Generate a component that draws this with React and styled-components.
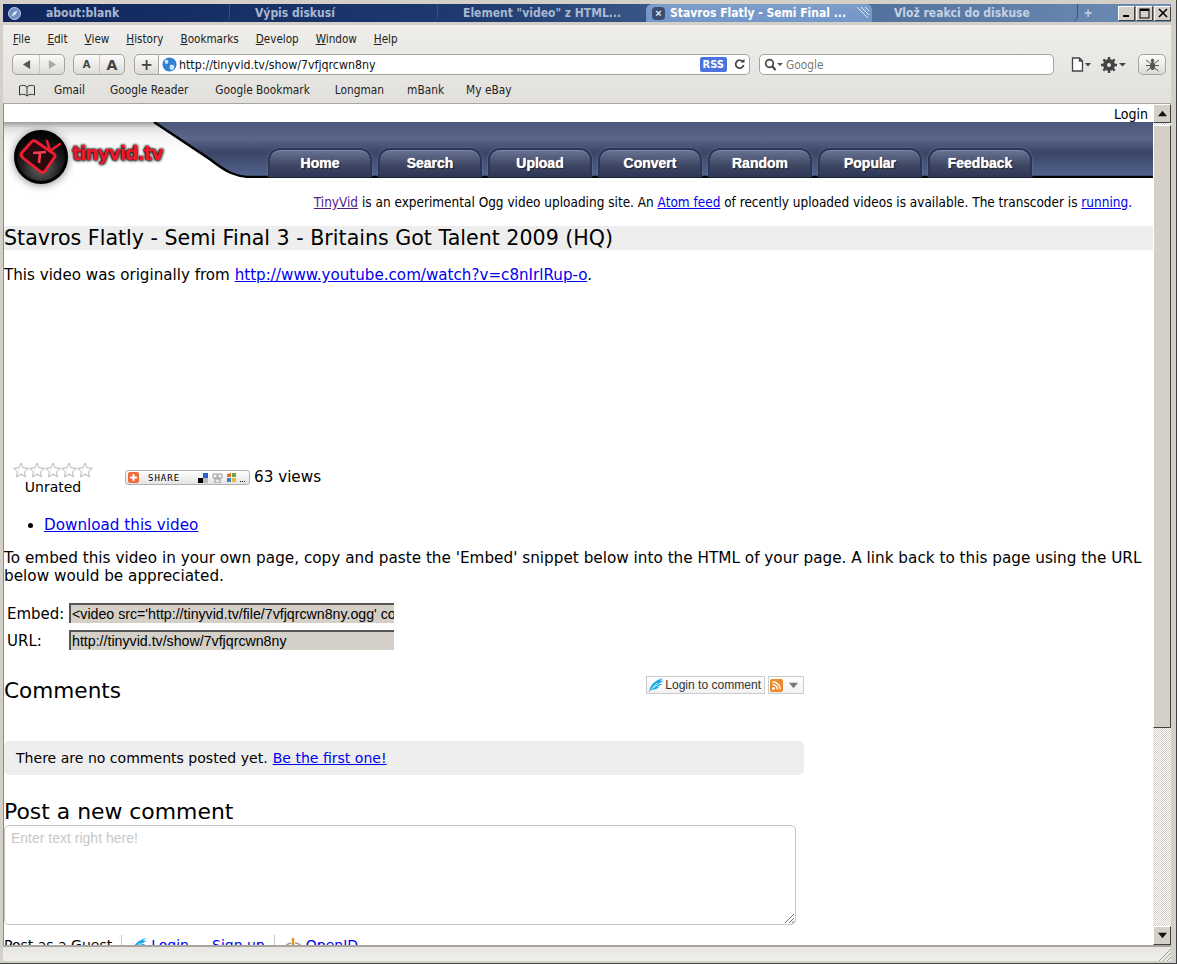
import styled, { createGlobalStyle } from 'styled-components';

const GlobalStyle = createGlobalStyle`
  html, body { margin: 0; padding: 0; height: 100%; overflow: hidden; background: #d4d0c8; }
  * { box-sizing: border-box; }
`;

const uiFont = '"DejaVu Sans Condensed", "DejaVu Sans", sans-serif';
const pageFont = '"DejaVu Sans", sans-serif';

const Window = styled.div`
  width: 1177px;
  height: 964px;
  display: flex;
  flex-direction: column;
  padding: 4px 5px 2px 3px;
  background: #d4d0c8;
  border-right: 1px solid #404040;
  border-bottom: 1px solid #404040;
  overflow: hidden;
`;

const TitleBar = styled.div`
  height: 18px;
  margin-bottom: 3px;
  flex: none;
  display: flex;
  align-items: center;
  background: linear-gradient(90deg, #10265c 0%, #1e3a70 40%, #44638f 62%, #6f8eb6 100%);
`;

const Tab = styled.div`
  position: relative;
  width: ${p => p.$w}px;
  height: 100%;
  flex: none;
  display: flex;
  align-items: center;
  gap: 5px;
  padding-left: ${p => p.$pad}px;
  font: bold 12px ${uiFont};
  color: ${p => p.$color || '#a9b8d2'};
  border-right: ${p => (p.$active ? '0' : '1px solid #33507f')};
  border-radius: ${p => (p.$active ? '6px 6px 0 0' : '0 0 6px 0')};
  background: ${p => (p.$active ? 'linear-gradient(#7d9cc9, #7297c9)' : 'transparent')};
`;

const TabClose = styled.span`
  width: 13px;
  height: 13px;
  border-radius: 4px;
  background: #3b4c70;
  color: #e6ebf3;
  font: bold 11px/13px "Liberation Sans", sans-serif;
  text-align: center;
  flex: none;
`;

const TabGrip = styled.svg`
  position: absolute;
  right: 2px;
  top: 2px;
`;

const TabLabel = styled.span`
  margin-left: 20px;
`;

const NewTab = styled.span`
  width: 40px;
  flex: none;
  padding-left: 6px;
  color: #b9cbe2;
  font: bold 14px "Liberation Sans", sans-serif;
`;

const WinButtons = styled.div`
  display: flex;
  gap: 1px;
  margin-left: auto;
  margin-right: 1px;
`;

const WinButton = styled.div`
  width: 17px;
  height: 15px;
  background: #d4d0c8;
  border: 1px solid;
  border-color: #fff #404040 #404040 #fff;
  display: flex;
  align-items: center;
  justify-content: center;
`;

const Chrome = styled.div`
  flex: none;
  height: 79px;
  background: linear-gradient(#efeeea, #e2e0dc);
  border-bottom: 1px solid #a8a59e;
  display: flex;
  flex-direction: column;
  font: 11.8px ${uiFont};
  color: #222;
`;

const MenuBar = styled.div`
  height: 27px;
  display: flex;
  align-items: center;
  gap: 17px;
  padding-left: 10px;
  font-size: 11.6px;
`;

const MenuItem = styled.span`
  &::first-letter { text-decoration: underline; }
`;

const NavBar = styled.div`
  height: 25px;
  display: flex;
  align-items: center;
  padding-left: 9px;
`;

const ButtonGroup = styled.div`
  display: flex;
  height: 21px;
  margin-right: ${p => p.$mr ?? 8}px;
  border: 1px solid #a5a39d;
  border-radius: ${p => (p.$joined ? '5px 0 0 5px' : '5px')};
  background: linear-gradient(#fbfbfa, #dddbd6);
  overflow: hidden;
  flex: none;
`;

const GroupButton = styled.div`
  width: ${p => p.$w || 25}px;
  display: flex;
  align-items: center;
  justify-content: center;
  color: ${p => p.$color || '#444'};
  font: bold ${p => p.$size || 12}px "DejaVu Sans", sans-serif;
  & + & { border-left: 1px solid #c8c6c0; }
`;

const UrlField = styled.div`
  width: 591px;
  height: 21px;
  flex: none;
  margin-right: 9px;
  display: flex;
  align-items: center;
  background: #fff;
  border: 1px solid #a5a39d;
  border-left: 0;
  border-radius: 0 5px 5px 0;
  padding: 0 3px;
  gap: 2px;
`;

const UrlText = styled.span`
  flex: 1;
  color: #111;
  font-size: 12.3px;
`;

const RssBadge = styled.span`
  margin-right: 4px;
  background: #4a73df;
  color: #fff;
  font: bold 11px ${uiFont};
  padding: 1px 3px;
  border-radius: 2px;
`;

const SearchField = styled.div`
  width: 295px;
  height: 21px;
  flex: none;
  display: flex;
  align-items: center;
  gap: 3px;
  padding-left: 4px;
  background: #fff;
  border: 1px solid #a5a39d;
  border-radius: 5px;
  color: #777;
`;

const ToolIcons = styled.div`
  display: flex;
  align-items: center;
  gap: 10px;
  margin-left: 17px;
  margin-right: 11px;
  width: 56px;
  flex: none;
`;

const BookmarkBar = styled.div`
  height: 26px;
  display: flex;
  align-items: center;
  padding-left: 15px;
`;

const Bookmark = styled.span`
  margin-left: ${p => p.$ml}px;
`;

const Viewport = styled.div`
  flex: 1;
  min-height: 0;
  display: flex;
  background: #fff;
  border-left: 1px solid #8d8a83;
`;

const Page = styled.div`
  flex: 1;
  min-width: 0;
  height: 100%;
  overflow: hidden;
  font: 15.2px/18px ${pageFont};
  color: #000;
  background: #fff;
`;

const Scrollbar = styled.div`
  width: 18px;
  flex: none;
  display: flex;
  flex-direction: column;
  background-color: #eceae6;
  background-image: repeating-conic-gradient(#d4d0c8 0 25%, #fff 0 50%);
  background-size: 2px 2px;
`;

const ScrollButton = styled.div`
  height: 19px;
  flex: none;
  display: flex;
  align-items: center;
  justify-content: center;
  background: #d4d0c8;
  border: 1px solid;
  border-color: #fff #404040 #404040 #fff;
`;

const ScrollThumb = styled.div`
  height: 603px;
  flex: none;
  margin-top: 2px;
  background: #d4d0c8;
  border: 1px solid;
  border-color: #fff #404040 #404040 #fff;
`;

const ScrollGap = styled.div`
  flex: 1;
`;

const StatusBar = styled.div`
  height: 16px;
  flex: none;
  display: flex;
  justify-content: flex-end;
  align-items: flex-end;
  background: linear-gradient(#e8e7e3, #efeeea);
  border-top: 2px solid #a8a59e;
`;

const LoginRow = styled.div`
  height: 18px;
  padding-right: 5px;
  text-align: right;
  font: 14px/20px ${uiFont};
`;

const Header = styled.div`
  position: relative;
  height: 56px;
  display: flex;
  background: linear-gradient(#9c9c9c 0, #dedede 6px, #f4f4f4 14px, #fff 30px);
`;

const HeaderArt = styled.svg`
  position: absolute;
  inset: 0;
  width: 100%;
  height: 100%;
`;

const LogoBlock = styled.div`
  position: relative;
  width: 264px;
  flex: none;
  display: flex;
  align-items: flex-start;
  padding: 7px 0 0 9px;
`;

const LogoMark = styled.svg`
  flex: none;
  filter: drop-shadow(0 1px 4px #888);
`;

const LogoText = styled.span`
  margin: 14px 0 0 3px;
  font: bold 18.6px/22px ${pageFont};
  letter-spacing: -1px;
  color: #f0182c;
  text-shadow: 0 0 2px #000, 0 0 3px #000, 1px 1px 3px #555;
`;

const Nav = styled.nav`
  position: relative;
  display: flex;
  gap: 6px;
  align-self: flex-end;
  margin-bottom: 1px;
`;

const NavTab = styled.a`
  width: 104px;
  height: 29px;
  display: flex;
  align-items: center;
  justify-content: center;
  padding-bottom: 2px;
  border: 2px solid #2c3552;
  border-bottom: 0;
  border-radius: 12px 12px 0 0;
  box-shadow: inset 0 1px 0 #7c87a8, 0 0 2px #6f82b4;
  background: linear-gradient(#6a7595, #3f4966 55%, #2c3655);
  color: #fff;
  font: bold 14px "Liberation Sans", sans-serif;
  text-shadow: 0 0 1px #fff, 1px 1px 1px #111;
`;

const Intro = styled.p`
  margin: 14px 0 0;
  height: 20px;
  padding-right: 21px;
  text-align: right;
  font: 13.47px/20px ${uiFont};
`;

const Link = styled.a`
  color: ${p => (p.$visited ? '#551a8b' : '#0000ee')};
  text-decoration: underline;
`;

const VideoTitle = styled.h2`
  margin: 14px 0 0;
  height: 24px;
  background: #eeeeee;
  font: 20.6px/24px ${pageFont};
`;

const Paragraph = styled.p`
  margin: ${p => p.$mt}px 0 0;
  font: ${p => p.$size}px/18px ${pageFont};
`;

const StatsRow = styled.div`
  margin-top: 178px;
  height: 34px;
  display: flex;
  align-items: flex-start;
`;

const Rating = styled.div`
  width: 80px;
  margin-left: 9px;
  flex: none;
  display: flex;
  flex-direction: column;
  align-items: center;
  font: 14px/18px ${pageFont};
`;

const Stars = styled.div`
  display: flex;
  height: 16px;
`;

const ShareButton = styled.div`
  width: 125px;
  height: 15px;
  margin: 8px 4px 0 32px;
  flex: none;
  display: flex;
  align-items: center;
  padding: 0 2px;
  border: 1px solid #b0b0b0;
  border-radius: 3px;
  background: linear-gradient(#fff, #e4e4e4);
  font: 9px "DejaVu Sans Mono", monospace;
  letter-spacing: 1px;
`;

const ShareLabel = styled.span`
  margin: 0 18px 0 9px;
`;

const Views = styled.span`
  margin-top: 6px;
`;

const List = styled.ul`
  margin: 20px 0 0;
  padding-left: 40px;
`;

const EmbedTable = styled.div`
  margin-top: 18px;
  padding-left: 3px;
  display: grid;
  grid-template-columns: 62px 325px;
  row-gap: 5px;
  font: 15px/22px ${pageFont};
`;

const EmbedField = styled.input`
  width: 100%;
  height: 20px;
  margin: 0;
  outline: 0;
  background: #d4d0c8;
  color: #000;
  border-style: solid;
  border-color: #555;
  border-width: 2px 0 0 2px;
  padding: 0 0 0 1px;
  font: 14.2px/18px "Liberation Sans", sans-serif;
`;

const CommentsBox = styled.div`
  width: 800px;
`;

const CommentsHead = styled.div`
  margin-top: 16px;
  display: flex;
  justify-content: space-between;
  align-items: flex-start;
`;

const CommentsTitle = styled.h3`
  margin: 10px 0 0;
  font: 21.6px/26px ${pageFont};
`;

const CommentTools = styled.div`
  display: flex;
  gap: 3px;
  margin-top: 8px;
`;

const ToolButton = styled.div`
  height: 18px;
  display: flex;
  align-items: center;
  gap: ${p => p.$gap}px;
  padding: 0 ${p => p.$pr}px 0 1px;
  border: 1px solid #ccc;
  background: linear-gradient(#fff, #f1f1f1);
  color: #333;
  font: 12.05px "Liberation Sans", sans-serif;
`;

const EmptyNotice = styled.div`
  margin-top: 37px;
  height: 34px;
  padding-left: 12px;
  display: flex;
  align-items: center;
  gap: 5px;
  background: #eeeeee;
  border-radius: 5px;
  font: 14.05px/18px ${pageFont};
`;

const PostTitle = styled.h3`
  margin: 24px 0 0;
  font: 21.9px/26px ${pageFont};
`;

const CommentInput = styled.div`
  width: 792px;
  height: 100px;
  position: relative;
  border: 1px solid #c4c4c4;
  border-radius: 5px;
  padding: 4px 6px;
  color: #c8c8c8;
  font: 14px/17px "Liberation Sans", sans-serif;
`;

const ResizeGrip = styled.svg`
  position: absolute;
  right: 1px;
  bottom: 1px;
`;

const GuestRow = styled.div`
  margin-top: 10px;
  height: 20px;
  display: flex;
  align-items: center;
  font: 14px/18px ${pageFont};
`;

const GuestPart = styled.div`
  display: flex;
  align-items: center;
  gap: 4px;
  height: 20px;
  padding: 0 9px 0 ${p => p.$pl || 0}px;
  & + & { border-left: 1px solid #c4c4c4; }
`;

const SignUp = styled(Link)`
  margin-left: 19px;
`;

const Feather = ({ size = 16 }) => (
  <svg width={size} height={size} viewBox="0 0 16 16">
    <path d="M1 15 C2 9 5 4 15 1 L12 4 L15.5 3.5 L11 7 L14.5 7 L9 10 L11.5 10.5 C7 13 4 12 1 15Z" fill="#17a8ea" />
    <path d="M2 14 L9 6 M5 11 L12 6" stroke="#fff" strokeWidth="0.8" />
  </svg>
);

const RssIcon = () => (
  <svg width="13" height="13" viewBox="0 0 13 13">
    <rect width="13" height="13" rx="2" fill="#ee8a2c" />
    <circle cx="3.5" cy="9.5" r="1.4" fill="#fff" />
    <path d="M2.5 5.5a5 5 0 0 1 5 5M2.5 2.8a7.7 7.7 0 0 1 7.7 7.7" stroke="#fff" strokeWidth="1.4" fill="none" />
  </svg>
);

const Star = () => (
  <svg width="16" height="16" viewBox="0 0 16 16">
    <path d="M8 1l2.1 4.8 5.2.5-3.9 3.5 1.1 5.1L8 12.3l-4.5 2.6 1.1-5.1L.7 6.3l5.2-.5z" fill="#fff" stroke="#b4b4b4" />
  </svg>
);

const Arrow = ({ dir, color = '#111', w = 9 }) => (
  <svg width={w} height={w} viewBox="0 0 10 10">
    {dir === 'up' && <path d="M5 2l5 6H0z" fill={color} />}
    {dir === 'down' && <path d="M5 8L0 2h10z" fill={color} />}
    {dir === 'left' && <path d="M1 5l8-5v10z" fill={color} />}
    {dir === 'right' && <path d="M9 5L1 0v10z" fill={color} />}
  </svg>
);

const Logo = () => (
  <LogoMark width="56" height="56" viewBox="0 0 56 56">
    <defs>
      <radialGradient id="ball" cx="0.5" cy="0.7" r="0.6">
        <stop offset="0" stopColor="#6a6a6a" />
        <stop offset="0.6" stopColor="#222" />
        <stop offset="1" stopColor="#050505" />
      </radialGradient>
    </defs>
    <circle cx="28" cy="28" r="25.5" fill="url(#ball)" stroke="#000" strokeWidth="3" />
    <path d="M8.5 24 L19 12.5 Q21 11 23 12.5 L41 25 Q43 27 41 29 L32 42 Q30 44 28 43 L10 29 Q7 26 8.5 24Z" fill="#2a0a0e" stroke="#f01c30" strokeWidth="2.8" strokeLinejoin="round" />
    <path d="M37 22 L34 12 M37 22 L47 15" stroke="#f01c30" strokeWidth="2.6" strokeLinecap="round" fill="none" />
    <path d="M20 24 L33 23 M27 24 L26 34" stroke="#f04050" strokeWidth="2.6" fill="none" />
  </LogoMark>
);

const BookIcon = () => (
  <svg width="18" height="13" viewBox="0 0 18 13">
    <path d="M9 3C7 1 4 1 1.5 2v9C4 10 7 10 9 12c2-2 5-2 7.5-1V2C14 1 11 1 9 3zM9 3v9" fill="none" stroke="#333" />
  </svg>
);

const PageIcon = () => (
  <svg width="20" height="15" viewBox="0 0 20 15">
    <path d="M1.5 1h7l3 3v10h-10zM8.5 1v3h3" fill="#fff" stroke="#444" strokeWidth="1.3" />
    <path d="M14 6h6l-3 3.5z" fill="#444" />
  </svg>
);

const GearIcon = () => (
  <svg width="26" height="16" viewBox="0 0 26 16">
    <circle cx="8" cy="8" r="4.5" fill="none" stroke="#444" strokeWidth="3" />
    <path d="M8 0v16M0 8h16M2.3 2.3l11.4 11.4M13.7 2.3L2.3 13.7" stroke="#444" strokeWidth="2.4" />
    <circle cx="8" cy="8" r="2" fill="#e8e7e3" />
    <path d="M18 6h7l-3.5 3.5z" fill="#444" />
  </svg>
);

const BugIcon = () => (
  <svg width="15" height="15" viewBox="0 0 15 15">
    <ellipse cx="7.5" cy="9" rx="2.6" ry="4" fill="#555" />
    <circle cx="7.5" cy="3.5" r="1.7" fill="#555" />
    <path d="M1 3l4 3M14 3l-4 3M1 8.5h4M14 8.5h-4M1.5 14l4-3M13.5 14l-4-3" stroke="#555" />
  </svg>
);

const SearchIcon = () => (
  <svg width="19" height="13" viewBox="0 0 19 13">
    <circle cx="5.5" cy="5.5" r="3.8" fill="none" stroke="#444" strokeWidth="1.7" />
    <path d="M8 8l3.5 4" stroke="#444" strokeWidth="2" />
    <path d="M13 5h6l-3 3z" fill="#555" />
  </svg>
);

const GlobeIcon = () => (
  <svg width="15" height="15" viewBox="0 0 15 15">
    <circle cx="7.5" cy="7.5" r="7" fill="#2f7fd4" />
    <path d="M3 3c3-1 4 1 3 3S2 7 3 3zM8 8c3-1 5 0 4 3s-3 2-4 1 0-3 0-4z" fill="#cfe6f8" />
  </svg>
);

const ReloadIcon = () => (
  <svg width="13" height="13" viewBox="0 0 13 13">
    <path d="M10 4a4 4 0 1 0 .6 3" fill="none" stroke="#444" strokeWidth="1.7" />
    <path d="M7.5 4.5h4V.8z" fill="#444" />
  </svg>
);

const SafariIcon = () => (
  <svg width="13" height="13" viewBox="0 0 13 13">
    <circle cx="6.5" cy="6.5" r="6" fill="#6f8fc0" stroke="#c8d4e6" />
    <path d="M3.5 9.5l2-4 4-2-2 4z" fill="#e6edf6" />
  </svg>
);

const ShareIcons = () => (
  <svg width="48" height="11" viewBox="0 0 48 11">
    <rect x="0" y="6" width="5" height="5" fill="#000" />
    <rect x="5" y="1" width="5" height="5" fill="#2a5fd0" />
    <rect x="5" y="6" width="5" height="5" fill="#bbb" />
    <path d="M15 2h4v4h-4zM20 2h4v4h-4zM17 7h5v4h-5z" fill="none" stroke="#9a9a9a" />
    <path d="M29 2l4-1v4h-4z" fill="#e46b2a" />
    <path d="M34 1h4v4h-4z" fill="#6aa83c" />
    <path d="M29 6h4v4h-4z" fill="#3a7fd0" />
    <path d="M34 6h4v4h-4z" fill="#e8b92a" />
    <circle cx="42.5" cy="9.5" r=".6" />
    <circle cx="44.5" cy="9.5" r=".6" />
    <circle cx="46.5" cy="9.5" r=".6" />
  </svg>
);

const OpenIdIcon = () => (
  <svg width="18" height="16" viewBox="0 0 18 16">
    <path d="M9 1v14" stroke="#f08a1c" strokeWidth="2.4" />
    <path d="M7 6C3 7 1 9 2 11c1 2 3 2 5 2M11 6c2 0 4 1 5 2l-2 1" fill="none" stroke="#999" strokeWidth="1.5" />
  </svg>
);

const NAV_ITEMS = ['Home', 'Search', 'Upload', 'Convert', 'Random', 'Popular', 'Feedback'];
const MENU_ITEMS = ['File', 'Edit', 'View', 'History', 'Bookmarks', 'Develop', 'Window', 'Help'];
const BOOKMARKS = [
  ['Gmail', 18],
  ['Google Reader', 25],
  ['Google Bookmark', 27],
  ['Longman', 25],
  ['mBank', 23],
  ['My eBay', 22],
];

export default function App() {
  return (
    <>
      <GlobalStyle />
      <Window>
        <TitleBar>
          <Tab $w={227} $pad={5}>
            <SafariIcon />
            <TabLabel>about:blank</TabLabel>
          </Tab>
          <Tab $w={208} $pad={25}>Výpis diskusí</Tab>
          <Tab $w={208} $pad={25}>Element "video" z HTML...</Tab>
          <Tab $w={226} $pad={6} $active $color="#ffffff">
            <TabClose>×</TabClose>
            Stavros Flatly - Semi Final ...
            <TabGrip width="14" height="13" viewBox="0 0 14 13">
              <path d="M1 1l11 11M5 1l8 8M9 1l4 4" stroke="#dfe7f3" fill="none" />
            </TabGrip>
          </Tab>
          <Tab $w={206} $pad={22} $color="#c4d2e6">Vlož reakci do diskuse</Tab>
          <NewTab>+</NewTab>
          <WinButtons>
            <WinButton>
              <svg width="9" height="9"><rect x="1" y="6" width="6" height="2" fill="#000" /></svg>
            </WinButton>
            <WinButton>
              <svg width="11" height="11"><rect x="1" y="1" width="9" height="9" fill="none" stroke="#000" /><rect x="1" y="1" width="9" height="2" fill="#000" /></svg>
            </WinButton>
            <WinButton>
              <svg width="10" height="10"><path d="M1 1l8 8M9 1l-8 8" stroke="#000" strokeWidth="1.6" /></svg>
            </WinButton>
          </WinButtons>
        </TitleBar>

        <Chrome>
          <MenuBar>
            {MENU_ITEMS.map(item => <MenuItem key={item}>{item}</MenuItem>)}
          </MenuBar>
          <NavBar>
            <ButtonGroup>
              <GroupButton $w={26}><Arrow dir="left" color="#555" /></GroupButton>
              <GroupButton><Arrow dir="right" color="#aaa" /></GroupButton>
            </ButtonGroup>
            <ButtonGroup $mr={9}>
              <GroupButton $size={10}>A</GroupButton>
              <GroupButton $size={14}>A</GroupButton>
            </ButtonGroup>
            <ButtonGroup $mr={0} $joined>
              <GroupButton $w={23} $size={15}>+</GroupButton>
            </ButtonGroup>
            <UrlField>
              <GlobeIcon />
              <UrlText>http://tinyvid.tv/show/7vfjqrcwn8ny</UrlText>
              <RssBadge>RSS</RssBadge>
              <ReloadIcon />
            </UrlField>
            <SearchField>
              <SearchIcon />
              Google
            </SearchField>
            <ToolIcons>
              <PageIcon />
              <GearIcon />
            </ToolIcons>
            <ButtonGroup $mr={0}>
              <GroupButton $w={26}><BugIcon /></GroupButton>
            </ButtonGroup>
          </NavBar>
          <BookmarkBar>
            <BookIcon />
            {BOOKMARKS.map(([name, ml]) => <Bookmark key={name} $ml={ml}>{name}</Bookmark>)}
          </BookmarkBar>
        </Chrome>

        <Viewport>
          <Page>
            <LoginRow>Login</LoginRow>
            <Header>
              <HeaderArt viewBox="0 0 1149 56" preserveAspectRatio="none">
                <defs>
                  <linearGradient id="band" x1="0" y1="0" x2="0" y2="1">
                    <stop offset="0" stopColor="#4c5679" />
                    <stop offset="0.3" stopColor="#5a6589" />
                    <stop offset="0.55" stopColor="#3b4565" />
                    <stop offset="1" stopColor="#51638f" />
                  </linearGradient>
                </defs>
                <path d="M150 0 L207 38 C222 50 232 55 248 55 L1149 55 L1149 0 Z" fill="url(#band)" />
                <path d="M150 0 L207 38 C222 50 232 55 248 55 L1149 55" fill="none" stroke="#000" strokeWidth="2.4" />
              </HeaderArt>
              <LogoBlock>
                <Logo />
                <LogoText>tinyvid.tv</LogoText>
              </LogoBlock>
              <Nav>
                {NAV_ITEMS.map(item => <NavTab key={item}>{item}</NavTab>)}
              </Nav>
            </Header>

            <Intro>
              <Link $visited>TinyVid</Link> is an experimental Ogg video uploading site. An <Link>Atom feed</Link> of recently uploaded videos is available. The transcoder is <Link>running</Link>.
            </Intro>

            <VideoTitle>Stavros Flatly - Semi Final 3 - Britains Got Talent 2009 (HQ)</VideoTitle>
            <Paragraph $mt={16} $size={15.14}>
              This video was originally from <Link>http://www.youtube.com/watch?v=c8nIrlRup-o</Link>.
            </Paragraph>

            <StatsRow>
              <Rating>
                <Stars>
                  <Star /><Star /><Star /><Star /><Star />
                </Stars>
                Unrated
              </Rating>
              <ShareButton>
                <svg width="11" height="11" viewBox="0 0 11 11">
                  <rect width="11" height="11" rx="2" fill="#f26a3c" />
                  <path d="M5.5 2v7M2 5.5h7" stroke="#fff" strokeWidth="2" />
                </svg>
                <ShareLabel>SHARE</ShareLabel>
                <ShareIcons />
              </ShareButton>
              <Views>63 views</Views>
            </StatsRow>

            <List>
              <li><Link>Download this video</Link></li>
            </List>

            <Paragraph $mt={15} $size={15.26}>
              To embed this video in your own page, copy and paste the 'Embed' snippet below into the HTML of your page. A link back to this page using the URL below would be appreciated.
            </Paragraph>

            <EmbedTable>
              <span>Embed:</span>
              <EmbedField readOnly value="<video src='http://tinyvid.tv/file/7vfjqrcwn8ny.ogg' controls>" />
              <span>URL:</span>
              <EmbedField readOnly value="http://tinyvid.tv/show/7vfjqrcwn8ny" />
            </EmbedTable>

            <CommentsBox>
              <CommentsHead>
                <CommentsTitle>Comments</CommentsTitle>
                <CommentTools>
                  <ToolButton $gap={1} $pr={3}><Feather />Login to comment</ToolButton>
                  <ToolButton $gap={6} $pr={5}>
                    <RssIcon />
                    <Arrow dir="down" color="#777" />
                  </ToolButton>
                </CommentTools>
              </CommentsHead>
              <EmptyNotice>
                There are no comments posted yet. <Link>Be the first one!</Link>
              </EmptyNotice>
              <PostTitle>Post a new comment</PostTitle>
              <CommentInput>
                Enter text right here!
                <ResizeGrip width="10" height="10" viewBox="0 0 10 10">
                  <path d="M1 10L10 1M5 10l5-5M8 10l2-2" stroke="#777" fill="none" />
                </ResizeGrip>
              </CommentInput>
              <GuestRow>
                <GuestPart>Post as a Guest</GuestPart>
                <GuestPart $pl={9}>
                  <Feather />
                  <Link>Login</Link>
                  <SignUp>Sign up</SignUp>
                </GuestPart>
                <GuestPart $pl={9}>
                  <OpenIdIcon />
                  <Link>OpenID</Link>
                </GuestPart>
              </GuestRow>
            </CommentsBox>
          </Page>

          <Scrollbar>
            <ScrollButton><Arrow dir="up" /></ScrollButton>
            <ScrollThumb />
            <ScrollGap />
            <ScrollButton><Arrow dir="down" /></ScrollButton>
          </Scrollbar>
        </Viewport>

        <StatusBar>
          <svg width="14" height="14" viewBox="0 0 14 14">
            <path d="M2 14L14 2M6 14l8-8M10 14l4-4" stroke="#999" fill="none" />
          </svg>
        </StatusBar>
      </Window>
    </>
  );
}
